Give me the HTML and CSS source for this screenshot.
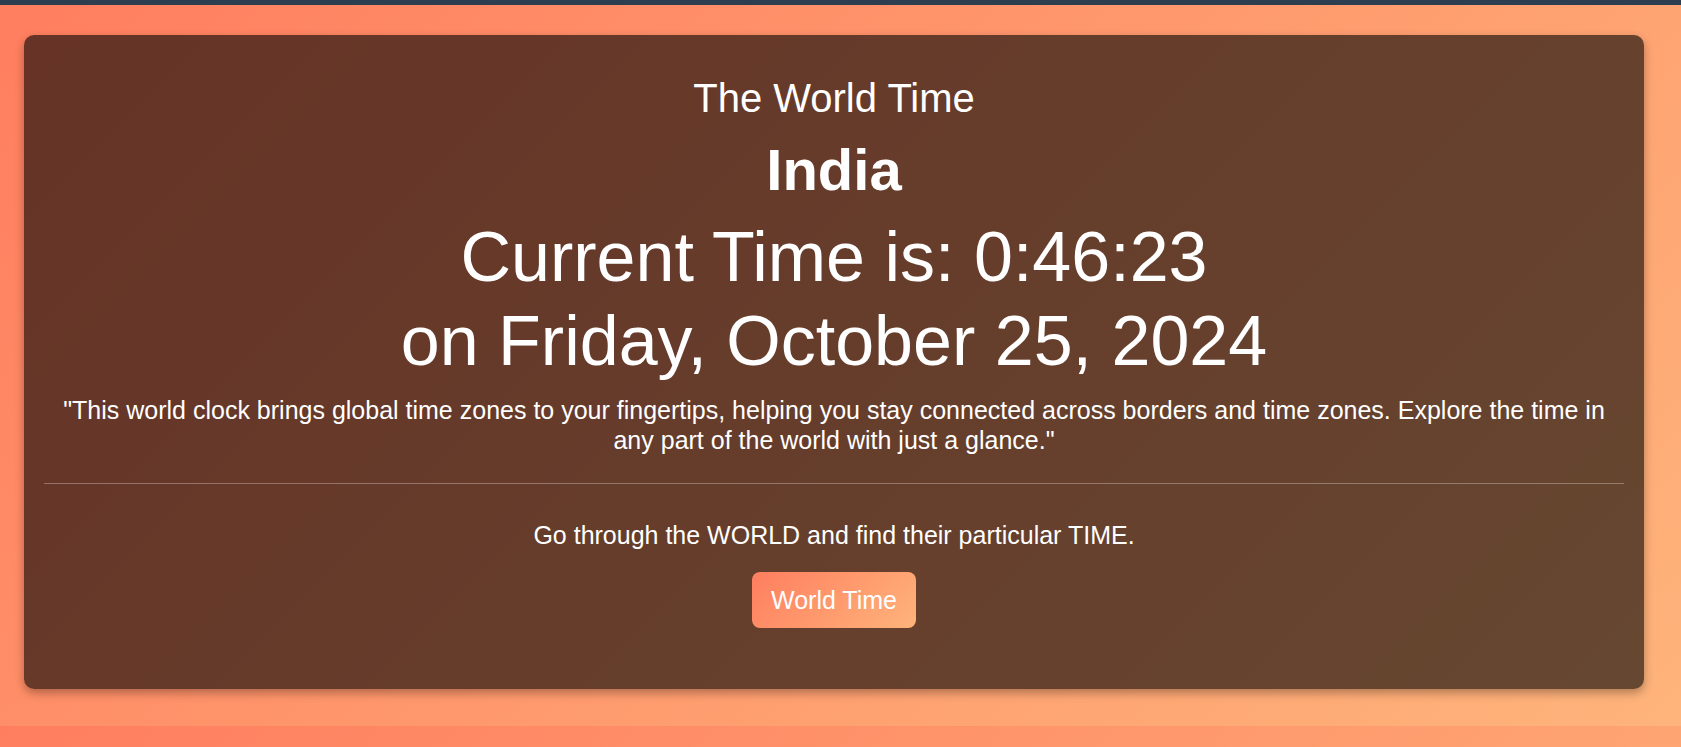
FILE: index.html
```html
<!DOCTYPE html>
<html lang="en">
<head>
<meta charset="utf-8">
<title>The World Time</title>
<link rel="stylesheet" href="styles.css">
</head>
<body>
<div class="topbar"></div>
<main class="page">
  <section class="card">
    <h2 class="title">The World Time</h2>
    <h1 class="country">India</h1>
    <p class="clock">Current Time is: 0:46:23<br>on Friday, October 25, 2024</p>
    <p class="quote">"This world clock brings global time zones to your fingertips, helping you stay connected across borders and time zones. Explore the time in any part of the world with just a glance."</p>
    <hr class="divider">
    <p class="cta">Go through the WORLD and find their particular TIME.</p>
    <button class="btn">World Time</button>
  </section>
</main>
</body>
</html>
```
FILE: styles.css
```css
html, body {
  margin: 0;
  padding: 0;
}
body {
  font-family: "Liberation Sans", Arial, sans-serif;
  color: #fff;
  background: linear-gradient(135deg, #ff7e5f, #feb47b);
}
.topbar {
  height: 5px;
  background: #2c3e50;
}
.page {
  padding: 30px 37px 37px 24px;
}
.card {
  background: rgba(0, 0, 0, 0.6);
  border-radius: 10px;
  box-shadow: 0 4px 10px rgba(0, 0, 0, 0.3);
  padding: 20px;
  text-align: center;
  display: flex;
  flex-direction: column;
  align-items: center;
}
.card > * {
  align-self: stretch;
}
.title {
  margin: 20px 0 0;
  font-size: 40px;
  line-height: 46px;
  font-weight: normal;
}
.country {
  margin: 16px 0 0;
  font-size: 58px;
  line-height: 66px;
  font-weight: bold;
}
.clock {
  margin: 12px 0 0;
  font-size: 70px;
  line-height: 84px;
}
.quote {
  margin: 12px 0 0;
  font-size: 25px;
  line-height: 30px;
}
.divider {
  margin: 28px 0 0;
  border: 0;
  height: 1px;
  background: rgba(255, 255, 255, 0.3);
}
.cta {
  margin: 36px 0 0;
  font-size: 25px;
  line-height: 30px;
}
.btn {
  align-self: center;
  margin: 22px 0 41px;
  font-family: "Liberation Sans", Arial, sans-serif;
  font-size: 25px;
  line-height: 28px;
  color: #fff;
  border: 0;
  border-radius: 8px;
  padding: 14px 19px;
  background: linear-gradient(135deg, #ff7e5f, #feb47b);
  cursor: pointer;
}
```
